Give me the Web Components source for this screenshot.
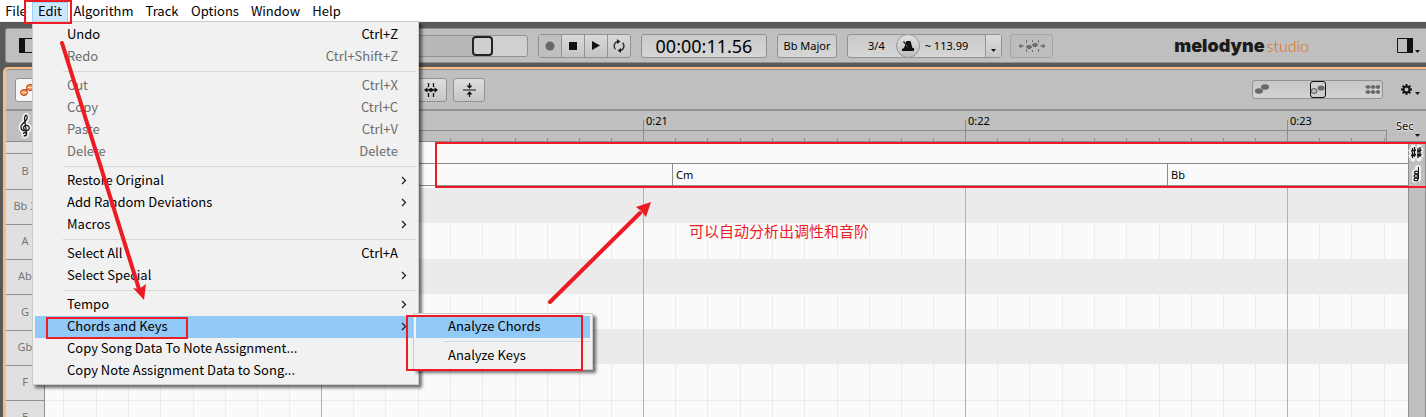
<!DOCTYPE html>
<html lang="en">
<head>
<meta charset="utf-8">
<title>Melodyne studio</title>
<style>
  html, body { margin: 0; height: 100%; }
  body { font: 12px/16px "Noto Sans", "Open Sans", sans-serif; color: #000; background: #5a5a5a; overflow: hidden; }
</style>
</head>
<body>
<melody-app></melody-app>
<script>
const BASE = `*{box-sizing:border-box}
button{font:inherit;color:inherit;margin:0;padding:0;border:0;background:none;text-align:left}
svg{display:block;overflow:visible}`;

function define(name, css, html) {
  customElements.define(name, class extends HTMLElement {
    constructor() {
      super();
      const t = document.createElement('template');
      t.innerHTML = `<style>${BASE}${css}</style>${typeof html === 'function' ? html(this) : html}`;
      this.attachShadow({ mode: 'open' }).append(t.content.cloneNode(true));
    }
  });
}

/* one heading of the menu bar; the slot takes its open menu */
define('menu-heading', `
  :host{display:block;position:relative;height:22px}
  button{width:100%;height:20px;margin-top:2px;padding-bottom:2px;border:1px solid transparent;line-height:16px;display:block;white-space:nowrap;text-align:center}
  :host([open]) button{background:#cce8ff;border-color:#99d1ff}
`, el => `<button type="button" aria-haspopup="menu">${el.getAttribute('label')}</button><slot></slot>`);

define('menu-panel', `
  :host{display:block;position:absolute;left:0;top:21px;z-index:5;width:387px;padding:2px;background:#f1f1f1;border:1px solid #ccc;box-shadow:3px 3px 3px rgba(0,0,0,.55)}
  :host([sub]){left:calc(100% - 3px);top:-3px;width:180px}
`, `<div role="menu"><slot></slot></div>`);

define('menu-entry', `
  :host{display:block;position:relative}
  button{display:flex;align-items:center;width:100%;height:22px;padding:0 18px 2px 32px;white-space:nowrap}
  span{flex:1}
  :host([active]) button{background:#91c9f7}
  :host([disabled]) button{color:#6d6d6d}
  svg{margin:0 -9px 0 0}
`, el => `<button type="button" role="menuitem"><span>${el.getAttribute('label')}</span>${
  el.hasAttribute('more') ? '<svg width="6" height="9" viewBox="0 0 6 9"><path d="M1 1l3.5 3.5L1 8" fill="none" stroke="#222" stroke-width="1.3"/></svg>' : (el.getAttribute('keys') || '')
}</button><slot></slot>`);

define('menu-rule', `:host{display:block;height:1px;margin:3px 0 3px 28px;background:#d7d7d7}`, '');

define('menu-bar', `:host{display:grid;grid-template-columns:32px 36px 71px 46px 60px 61px 41px;height:22px;background:#fff;border-bottom:1px solid #f0f0f0;position:relative;z-index:5;font-family:"Noto Sans CJK SC",sans-serif;font-size:13px}`, `
  <menu-heading label="File"></menu-heading>
  <menu-heading label="Edit" open>
    <menu-panel>
      <menu-entry label="Undo" keys="Ctrl+Z"></menu-entry>
      <menu-entry label="Redo" keys="Ctrl+Shift+Z" disabled></menu-entry>
      <menu-rule></menu-rule>
      <menu-entry label="Cut" keys="Ctrl+X" disabled></menu-entry>
      <menu-entry label="Copy" keys="Ctrl+C" disabled></menu-entry>
      <menu-entry label="Paste" keys="Ctrl+V" disabled></menu-entry>
      <menu-entry label="Delete" keys="Delete" disabled></menu-entry>
      <menu-rule></menu-rule>
      <menu-entry label="Restore Original" more></menu-entry>
      <menu-entry label="Add Random Deviations" more></menu-entry>
      <menu-entry label="Macros" more></menu-entry>
      <menu-rule></menu-rule>
      <menu-entry label="Select All" keys="Ctrl+A"></menu-entry>
      <menu-entry label="Select Special" more></menu-entry>
      <menu-rule></menu-rule>
      <menu-entry label="Tempo" more></menu-entry>
      <menu-entry label="Chords and Keys" more active>
        <menu-panel sub>
          <menu-entry label="Analyze Chords" active></menu-entry>
          <menu-rule></menu-rule>
          <menu-entry label="Analyze Keys"></menu-entry>
        </menu-panel>
      </menu-entry>
      <menu-entry label="Copy Song Data To Note Assignment..."></menu-entry>
      <menu-entry label="Copy Note Assignment Data to Song..."></menu-entry>
    </menu-panel>
  </menu-heading>
  <menu-heading label="Algorithm"></menu-heading>
  <menu-heading label="Track"></menu-heading>
  <menu-heading label="Options"></menu-heading>
  <menu-heading label="Window"></menu-heading>
  <menu-heading label="Help"></menu-heading>`);

const CARET = '<svg width="5" height="3" viewBox="0 0 5 3"><path d="M0 0h5L2.5 3z" fill="#111"/></svg>';

define('transport-bar', `
  :host{display:flex;align-items:center;height:35px;margin:6px 0 4px 5px;padding-left:13px;background:#bfbfbf;border:1px solid #8e8e8e;border-right:0;border-radius:3px 0 0 3px;font-size:12px}
  .left{flex:0 1 509px;display:flex;align-items:center;justify-content:space-between}
  input{appearance:none;margin:0;width:200px;height:22px;border:1px solid #929292;border-radius:3px;background:linear-gradient(90deg,#b8b8b8 155px,#d0d0d0 155px)}
  input::-webkit-slider-thumb{appearance:none;width:21px;height:20px;border:2px solid #222;border-radius:4px;background:#cfcfcf}
  .box,.group{display:flex;align-items:center;height:24px;margin-left:10px;border:1px solid #929292;border-radius:3px;background:linear-gradient(#cacaca,#d6d6d6)}
  .group{width:93px;background:linear-gradient(#dadada,#c4c4c4)}
  .group button{flex:1;height:22px;display:grid;place-items:center}
  .group button+button{border-left:1px solid #929292}
  .group button:first-child{background:#c0c0c0}
  .time{width:126px;justify-content:center;font-size:18px;line-height:22px}
  .key{width:60px;justify-content:center;font-size:11px}
  .tempo{width:155px;padding-left:20px;font-size:11px}
  .knob{width:24px;height:24px;margin:0 5px 0 11px;border:1px solid #999;border-radius:50%;background:linear-gradient(#e2e2e2,#bdbdbd);display:grid;place-items:center}
  .tempo output{flex:1;white-space:nowrap}
  .drop{width:16px;height:22px;border-left:1px solid #929292;background:linear-gradient(#dcdcdc,#c6c6c6);display:grid;place-items:center;padding-top:10px}
  .fit{width:43px;margin-left:8px;justify-content:center;background:#bdbdbd;border-color:#a4a4a4}
  .logo{margin-left:auto;display:flex;align-items:center;gap:2px;color:#1c1c1b;font:900 18px/24px Inter,sans-serif}
  .logo i{font:300 16px/24px Lato,sans-serif;color:#e06c08}
  .side{display:flex;align-items:flex-end;gap:2px;margin:0 6px 0 88px}
`, `
  <div class="left">
    <button type="button" aria-label="Toggle left panel"><svg width="16" height="15"><path d="M.5.5h15v14H.5z" fill="#bfbfbf" stroke="#111"/><path d="M0 0h6v15H0z" fill="#111"/></svg></button>
    <input type="range" aria-label="Volume" min="0" max="179" value="145">
  </div>
  <div class="group">
    <button type="button" aria-label="Record"><svg width="10" height="10"><circle cx="5" cy="5" r="4.5" fill="#686868"/></svg></button>
    <button type="button" aria-label="Stop"><svg width="8" height="8"><path d="M0 0h8v8H0z" fill="#111"/></svg></button>
    <button type="button" aria-label="Play"><svg width="8" height="9"><path d="M0 0l8 4.5L0 9z" fill="#111"/></svg></button>
    <button type="button" aria-label="Cycle"><svg width="12" height="14" viewBox="0 0 12 14"><g fill="none" stroke="#222" stroke-width="1.3"><path d="M7.5 11.6A4.8 4.8 0 0 0 9.600 3.700M4.500 2.400A4.800 4.800 0 0 0 2.400 10.300"/></g><path d="M4 0l3.500 2.500L4 5zM8 9l-3.500 2.500L8 14z" fill="#222"/></svg></button>
  </div>
  <output class="box time">00:00:11.56</output>
  <button type="button" class="box key">Bb Major</button>
  <div class="box tempo">3/4
    <button type="button" class="knob" aria-label="Metronome"><svg width="12" height="10" viewBox="0 0 12 10"><path d="M4.500 0h4l2 7H12v3H0V8l2-1zM1 1l1-1 5 6-1 1z" fill="#111"/><path d="M2 1.500l4 5" stroke="#888" stroke-width=".6"/></svg></button>
    <output>~ 113.99</output>
    <button type="button" class="drop" aria-label="Tempo options">${CARET}</button>
  </div>
  <button type="button" class="box fit" aria-label="Fit to notes"><svg width="28" height="12" viewBox="0 0 28 12"><g fill="#6d6d6d" stroke="#6d6d6d"><path d="M1 6h5M22 6h5" fill="none"/><path d="M3.500 3.500L.5 6l3 2.500zM24.500 3.500l3 2.500-3 2.500z" stroke="none"/><path d="M8.500 0v3M8.500 9v3M14.500 0v2M14.500 10v2M20.500 0v3M20.500 9v3" fill="none"/><ellipse cx="11" cy="7" rx="2.500" ry="1.600"/><ellipse cx="17" cy="5" rx="2.500" ry="1.600"/></g></svg></button>
  <div class="logo">melodyne<i>studio</i></div>
  <button type="button" class="side" aria-label="Toggle right panel"><svg width="16" height="15"><path d="M.5.5h15v14H.5z" fill="none" stroke="#111"/><path d="M10 0h6v15h-6z" fill="#111"/></svg>${CARET}</button>
`);

define('tool-row', `
  :host{display:flex;align-items:center;height:42px;padding:0 6px 0 9px;background:#bfbfbf;border-top:1px solid #929292;border-bottom:2px solid #929292;border-top-left-radius:3px}
  .b{width:32px;height:24px;border:1px solid #929292;border-radius:3px;background:linear-gradient(#dedede,#c6c6c6);display:grid;place-items:center;margin-right:6px}
  .main{background:#f6f6f6;margin-right:368px}
  .main svg{margin-right:9px}
  .view{position:relative;width:131px;height:19px;margin-left:auto}
  input{appearance:none;margin:0;display:block;width:100%;height:100%;border:1px solid #929292;border-radius:3px;background:linear-gradient(#c6c6c6,#d4d4d4)}
  input::-webkit-slider-thumb{appearance:none;width:16px;height:17px;border:1px solid #111;border-radius:3px;background:#cfcfcf}
  .view svg{position:absolute;inset:0;pointer-events:none}
  .gear{display:flex;align-items:flex-end;gap:3px;margin-left:18px}
`, `
  <button type="button" class="b main" aria-label="Main tool"><svg width="14" height="14" viewBox="0 0 14 14"><path d="M4 9l5-5" stroke="#a33"/><ellipse cx="4" cy="9.500" rx="3.500" ry="3" fill="#f1a04e" stroke="#c03028"/><ellipse cx="10" cy="4.500" rx="3.500" ry="3" fill="#f1a04e" stroke="#c03028"/><path d="M1.500 9.500h5M7.500 4.500h5" stroke="#ffe3a0"/></svg></button>
  <button type="button" class="b" aria-label="Quantize time"><svg width="14" height="14" viewBox="0 0 14 14"><path d="M1 7h12M4.500 0v4M4.500 10v4M9.500 0v4M9.500 10v4" stroke="#111" stroke-width="1.300"/><path d="M3.500 4.300L0 7l3.500 2.700zM10.500 4.300L14 7l-3.500 2.700z" fill="#111"/><circle cx="7" cy="7" r="2" fill="#111"/></svg></button>
  <button type="button" class="b" aria-label="Quantize pitch"><svg width="13" height="14" viewBox="0 0 13 14"><path d="M0 7h13M6.500 0v3M6.500 11v3" stroke="#111" stroke-width="1.200"/><path d="M3.500 2.500h6l-3 3.300zM3.500 11.500h6l-3-3.300z" fill="#111"/></svg></button>
  <div class="view"><input type="range" aria-label="Note display" min="0" max="2" value="1">
    <svg width="131" height="19"><g fill="#686868"><ellipse cx="7" cy="11" rx="4" ry="2.800"/><ellipse cx="13" cy="7" rx="4" ry="2.800"/><ellipse cx="69" cy="8" rx="3.500" ry="2.600"/><ellipse cx="62" cy="11" rx="3" ry="2.400" fill="#bbb" stroke="#555"/><path d="M113 7h15M113 12h15" stroke="#686868"/><circle cx="116" cy="7" r="2"/><circle cx="121" cy="7" r="2"/><circle cx="126" cy="7" r="2"/><circle cx="116" cy="12" r="2"/><circle cx="121" cy="12" r="2"/><circle cx="126" cy="12" r="2"/></g></svg></div>
  <button type="button" class="gear" aria-label="Settings"><svg width="11" height="11" viewBox="0 0 11 11"><circle cx="5.500" cy="5.500" r="3" fill="none" stroke="#111" stroke-width="2"/><path d="M5.500 0v2M5.500 9v2M0 5.500h2M9 5.500h2M1.600 1.600L3 3M8 8l1.400 1.400M9.400 1.600L8 3M3 8L1.600 9.400" stroke="#111" stroke-width="1.800"/></svg>${CARET}</button>
`);

/* one second of the timeline: ten equal steps, the last one closing on a full second */
define('time-second', `
  :host{display:flex;flex:0 0 322px;height:100%;align-items:flex-end;justify-content:flex-end;overflow:hidden}
  :host([lead]){flex-basis:277px}
  b{flex:0 0 32px;height:var(--minor-h,100%);border-right:1px solid var(--minor,#ebebeb)}
  b:nth-of-type(3){flex-basis:33px}
  b:nth-of-type(6){flex-basis:33px}
  b:last-of-type{height:100%;border-color:var(--major,#b2b2b2)}
`, '<b></b>'.repeat(10));

const SECONDS = '<time-second lead></time-second>' + '<time-second></time-second>'.repeat(8);

define('time-ruler', `
  :host{display:flex;height:31px;background:#bfbfbf;border-bottom:1px solid #8a8a8a}
  .clef{flex:0 0 39px;display:grid;place-items:center;border-right:1px solid #aaa}
  .track{flex:1;min-width:0;overflow:hidden;position:relative;display:grid;grid-template-rows:19px 11px}
  .labels{display:flex;grid-area:1/1;padding:2px 0 0 277px;font-size:11px;overflow:hidden}
  .labels span{flex:0 0 322px;padding-left:2px}
  .labels span:first-child{flex-basis:0;padding:0}
  .base{grid-area:2/1;border-top:1px solid #8c8c8c;border-right:1px solid #8c8c8c}
  .ticks{grid-area:1/1/3/2;margin-top:9px;display:flex;overflow:hidden;--minor:#8c8c8c;--major:#8c8c8c;--minor-h:3px}
  .unit{flex:0 0 39px;padding:3px 6px 0 9px;font-size:11px;line-height:16px;text-align:left;text-shadow:0 0 2px #fff,0 0 2px #fff,0 0 2px #fff}
  .unit svg{margin:0 0 0 auto}
`, `
  <div class="clef"><svg width="12" height="24" viewBox="0 0 12 24"><g fill="none" stroke-linecap="round"><path d="M5.500 21.500a1.500 1.500 0 1 0-1-2M5 22c2 0 3-1 2.600-3L5.500 5C5.300 3 6.500 1.200 7.300 1.200 8.500 2.500 8.300 5 6.500 7L3.500 10C1 12.500 1.500 16.500 5.500 16.800 9 17 10.500 15.500 10.200 13.500 9.800 11 5.500 10.500 4.500 13.500c-.2 1 .3 1.800 1.200 2" stroke="#eee" stroke-width="5"/><path d="M5.500 21.500a1.500 1.500 0 1 0-1-2M5 22c2 0 3-1 2.600-3L5.500 5C5.300 3 6.500 1.200 7.300 1.200 8.500 2.500 8.300 5 6.500 7L3.500 10C1 12.500 1.500 16.500 5.500 16.800 9 17 10.500 15.500 10.200 13.500 9.800 11 5.500 10.500 4.500 13.500c-.2 1 .3 1.800 1.200 2" stroke="#111" stroke-width="1.200"/></g></svg></div>
  <div class="track"><div class="labels"><span style="flex-basis:322px"></span><span>0:21</span><span>0:22</span><span>0:23</span></div><div class="base"></div><div class="ticks">${SECONDS}</div></div>
  <button type="button" class="unit">Sec${CARET}</button>
`);

define('pitch-keys', `
  :host{display:block;flex:0 0 39px;overflow:hidden;background:#e0e0e0;border-right:1px solid #909090;color:#777;font-size:11px}
  div{display:grid;place-items:center;height:35px;padding-bottom:2px;border-bottom:1px solid #909090;white-space:nowrap}
  .gap{height:12px}
  .tall{height:36px}
`, `<div class="gap"></div><div class="tall">B</div><div>Bb 3</div><div>A</div><div>Ab</div><div class="tall">G</div><div>Gb</div><div>F</div><div>E</div>`);

define('chord-track', `
  :host{display:block;background:#fafafa;font-size:11px;height:46px}
  div{height:22px;border-bottom:1px solid #8c8c8c;display:flex;overflow:hidden}
  span{flex:0 0 495px;border-left:1px solid #8c8c8c;padding:3px 0 0 3px}
  span:first-child{flex-basis:627px;border:0}
`, `<div></div><div><span></span><span>Cm</span><span>Bb</span></div>`);

define('note-grid', `
  :host{display:grid;flex:1;min-height:0;overflow:hidden;background:#fafafa}
  .rows,.lines{grid-area:1/1;min-width:0;min-height:0;overflow:hidden}
  .rows i{display:block;height:35px}
  .rows i:nth-child(odd){background:#ebebeb}
  .rows .tall{height:36px}
  .rows i.open{background:none;border-top:1px solid #ebebeb}
  .lines{display:flex}
`, `<div class="rows"><i></i><i class="tall"></i><i></i><i></i><i></i><i class="tall"></i><i class="open"></i></div><div class="lines">${SECONDS}</div>`);

define('track-editor', `
  :host{display:flex;flex-direction:column;flex:1;min-height:0;margin-left:3px;border:solid #f9bd85;border-width:2px 0 0 3px;border-top-left-radius:5px;background:#bfbfbf}
  .body{flex:1;min-height:0;display:flex}
  .main{flex:1;min-width:0;display:flex;flex-direction:column}
  .rail{flex:0 0 18px;border:solid #8e8e8e;border-width:0 1px;display:flex;flex-direction:column;align-items:center;gap:2px;padding:2px 2px 0 0}
  .rail button{height:18px}
`, `
  <tool-row></tool-row>
  <time-ruler></time-ruler>
  <div class="body">
    <pitch-keys></pitch-keys>
    <div class="main"><chord-track></chord-track><note-grid></note-grid></div>
    <div class="rail">
      <button type="button" aria-label="Show key track"><svg width="14" height="18" viewBox="0 0 14 18"><path d="M4 3v12M10 3v12M2 7l10-1M2 12l10-1" stroke="#eee" stroke-width="5" stroke-linecap="round"/><path d="M3.500 4v10M5.500 3v10M9 4v10M11 3v10M2 7l5-1M2 11.500l5-1M8 7l4.500-1M8 11.500l4.500-1" stroke="#111" stroke-width="1.300"/></svg></button>
      <button type="button" aria-label="Show chord track"><svg width="14" height="20" viewBox="0 0 14 20"><path d="M9 4v11M6 8v8" stroke="#eee" stroke-width="6" stroke-linecap="round"/><path d="M9.500 3v12" stroke="#111"/><g fill="#fff" stroke="#111" stroke-width="1.200"><ellipse cx="7.500" cy="8.500" rx="2" ry="1.300"/><ellipse cx="7" cy="12" rx="2" ry="1.300"/><ellipse cx="7" cy="15.500" rx="2" ry="1.300"/></g></svg></button>
    </div>
  </div>`);

/* red notes drawn over the window: frames, arrows and a caption */
define('markup-layer', `
  :host{position:absolute;inset:0;z-index:9;overflow:hidden;pointer-events:none;color:#ed1c24}
  svg{position:absolute;inset:0;width:100%;height:100%}
  p{position:absolute;left:689px;top:221px;margin:0;font:15px/20px "Noto Sans CJK SC",sans-serif;white-space:nowrap}
`, `
  <svg><g fill="none" stroke="#ed1c24" stroke-width="2">
    <rect x="25" y="1" width="46" height="22"/><rect x="47" y="318" width="140" height="20"/>
    <rect x="407" y="316" width="175" height="54"/><rect x="436" y="143" width="1010" height="44"/></g>
    <g stroke="#ed1c24" stroke-width="4" stroke-linecap="round"><path d="M62 43l77 246"/><path d="M550 302l90-89"/></g>
    <g fill="#ed1c24"><path d="M144 300l-11-12 6 1 7-5z"/><path d="M651 202l-15 5 5 4 5 6z"/></g>
  </svg><p lang="zh">可以自动分析出调性和音阶</p>`);

define('melody-app', `:host{display:flex;flex-direction:column;height:100vh;position:relative;background:#5a5a5a}`,
  `<menu-bar></menu-bar><transport-bar></transport-bar><track-editor></track-editor><markup-layer></markup-layer>`);
</script>
</body>
</html>
